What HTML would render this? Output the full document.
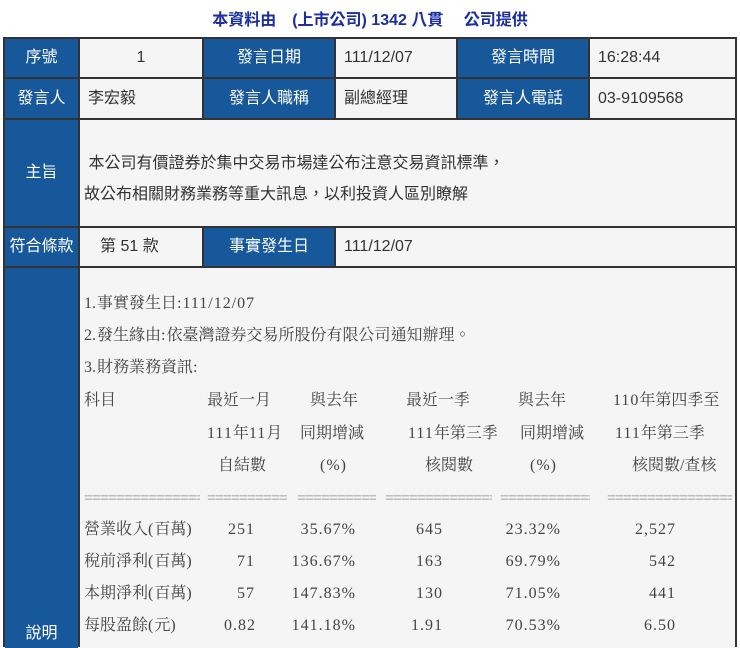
<!DOCTYPE html>
<html><head><meta charset="utf-8"><style>
body{margin:0;width:740px;height:642px;background:#fff;position:relative;overflow:hidden;font-family:"Liberation Sans","Noto Sans CJK TC",sans-serif;}
.c{position:absolute;box-sizing:border-box;font-size:16px;line-height:20px;color:#333;display:flex;align-items:center;}
.c span{display:block;line-height:20px;height:20px;}
.b{background:#17589a;color:#fff;justify-content:center;}
.g{background:#f5f5f5;}
.t{position:absolute;font-family:"Liberation Serif","Noto Serif CJK TC",serif;font-size:16px;color:#444;white-space:nowrap;line-height:20px;}
.n{letter-spacing:1px;}
.eq{overflow:hidden;letter-spacing:-1px;color:#888;}
</style></head><body>
<div style="position:absolute;left:0;width:740px;top:6px;text-align:center;font-weight:bold;color:#1b2fa0;font-size:16px;">本資料由　(上市公司) 1342 八貫　 公司提供</div>
<div style="position:absolute;left:3px;top:37px;width:734px;height:610px;background:#333;"></div>
<div class="c b" style="left:5px;top:39px;width:73px;height:38px"><span>序號</span></div>
<div class="c g" style="left:80px;top:39px;width:122px;height:38px;justify-content:center"><span>1</span></div>
<div class="c b" style="left:204px;top:39px;width:130px;height:38px"><span>發言日期</span></div>
<div class="c g" style="left:336px;top:39px;width:120px;height:38px;padding-left:8px"><span>111/12/07</span></div>
<div class="c b" style="left:458px;top:39px;width:130px;height:38px"><span>發言時間</span></div>
<div class="c g" style="left:590px;top:39px;width:145px;height:38px;padding-left:8px"><span>16:28:44</span></div>
<div class="c b" style="left:5px;top:79px;width:73px;height:39px"><span>發言人</span></div>
<div class="c g" style="left:80px;top:79px;width:122px;height:39px;padding-left:8px"><span>李宏毅</span></div>
<div class="c b" style="left:204px;top:79px;width:130px;height:39px"><span>發言人職稱</span></div>
<div class="c g" style="left:336px;top:79px;width:120px;height:39px;padding-left:8px"><span>副總經理</span></div>
<div class="c b" style="left:458px;top:79px;width:130px;height:39px"><span>發言人電話</span></div>
<div class="c g" style="left:590px;top:79px;width:145px;height:39px;padding-left:8px"><span>03-9109568</span></div>
<div class="c b" style="left:5px;top:120px;width:73px;height:106px"><span>主旨</span></div>
<div class="c g" style="left:80px;top:120px;width:655px;height:106px;display:block;padding:28px 0 0 4px;line-height:31px;">&nbsp;本公司有價證券於集中交易市場達公布注意交易資訊標準，<br>故公布相關財務業務等重大訊息，以利投資人區別瞭解</div>
<div class="c b" style="left:5px;top:228px;width:73px;height:38px"><span>符合條款</span></div>
<div class="c g" style="left:80px;top:228px;width:122px;height:38px;padding-left:20px"><span>第 51 款</span></div>
<div class="c b" style="left:204px;top:228px;width:130px;height:38px"><span>事實發生日</span></div>
<div class="c g" style="left:336px;top:228px;width:399px;height:38px;padding-left:8px"><span>111/12/07</span></div>
<div class="c b" style="left:5px;top:268px;width:73px;height:380px;align-items:flex-end;padding-bottom:4px"><span>說明</span></div>
<div class="c g" style="left:80px;top:268px;width:655px;height:380px"></div>
<div class="t" style="left:84px;top:294px">1<span class="n">.</span>事實發生日<span class="n">:111/12/07</span></div>
<div class="t" style="left:84px;top:326px">2<span class="n">.</span>發生緣由<span class="n">:</span>依臺灣證券交易所股份有限公司通知辦理。</div>
<div class="t" style="left:84px;top:358px">3<span class="n">.</span>財務業務資訊<span class="n">:</span></div>
<div class="t" style="left:84px;top:391px">科目</div>
<div class="t" style="left:207px;top:391px">最近一月</div>
<div class="t" style="left:310px;top:391px">與去年</div>
<div class="t" style="left:406px;top:391px">最近一季</div>
<div class="t" style="left:518px;top:391px">與去年</div>
<div class="t" style="left:613px;top:391px"><span class="n">110</span>年第四季至</div>
<div class="t" style="left:207px;top:424px"><span class="n">111</span>年<span class="n">11</span>月</div>
<div class="t" style="left:300px;top:424px">同期增減</div>
<div class="t" style="left:408px;top:424px"><span class="n">111</span>年第三季</div>
<div class="t" style="left:520px;top:424px">同期增減</div>
<div class="t" style="left:615px;top:424px"><span class="n">111</span>年第三季</div>
<div class="t" style="left:218px;top:456px">自結數</div>
<div class="t n" style="left:320px;top:456px">(%)</div>
<div class="t" style="left:425px;top:456px">核閱數</div>
<div class="t n" style="left:530px;top:456px">(%)</div>
<div class="t" style="left:632px;top:456px">核閱數/查核</div>
<div class="t eq" style="left:84px;top:489px;width:116px">==============================</div>
<div class="t eq" style="left:207px;top:489px;width:80px">==============================</div>
<div class="t eq" style="left:297px;top:489px;width:79px">==============================</div>
<div class="t eq" style="left:385px;top:489px;width:107px">==============================</div>
<div class="t eq" style="left:500px;top:489px;width:90px">==============================</div>
<div class="t eq" style="left:607px;top:489px;width:125px">==============================</div>
<div class="t" style="left:84px;top:520px">營業收入<span class="n">(</span>百萬<span class="n">)</span></div>
<div class="t" style="left:84px;top:552px">稅前淨利<span class="n">(</span>百萬<span class="n">)</span></div>
<div class="t" style="left:84px;top:584px">本期淨利<span class="n">(</span>百萬<span class="n">)</span></div>
<div class="t" style="left:84px;top:616px">每股盈餘<span class="n">(</span>元<span class="n">)</span></div>
<div class="t n" style="right:485px;top:520px">251</div>
<div class="t n" style="right:485px;top:552px">71</div>
<div class="t n" style="right:485px;top:584px">57</div>
<div class="t n" style="right:484px;top:616px">0.82</div>
<div class="t n" style="right:384px;top:520px">35.67%</div>
<div class="t n" style="right:384px;top:552px">136.67%</div>
<div class="t n" style="right:384px;top:584px">147.83%</div>
<div class="t n" style="right:384px;top:616px">141.18%</div>
<div class="t n" style="right:297px;top:520px">645</div>
<div class="t n" style="right:297px;top:552px">163</div>
<div class="t n" style="right:297px;top:584px">130</div>
<div class="t n" style="right:297px;top:616px">1.91</div>
<div class="t n" style="right:179px;top:520px">23.32%</div>
<div class="t n" style="right:179px;top:552px">69.79%</div>
<div class="t n" style="right:179px;top:584px">71.05%</div>
<div class="t n" style="right:179px;top:616px">70.53%</div>
<div class="t n" style="right:64px;top:520px">2,527</div>
<div class="t n" style="right:64px;top:552px">542</div>
<div class="t n" style="right:64px;top:584px">441</div>
<div class="t n" style="right:64px;top:616px">6.50</div>
</body></html>
